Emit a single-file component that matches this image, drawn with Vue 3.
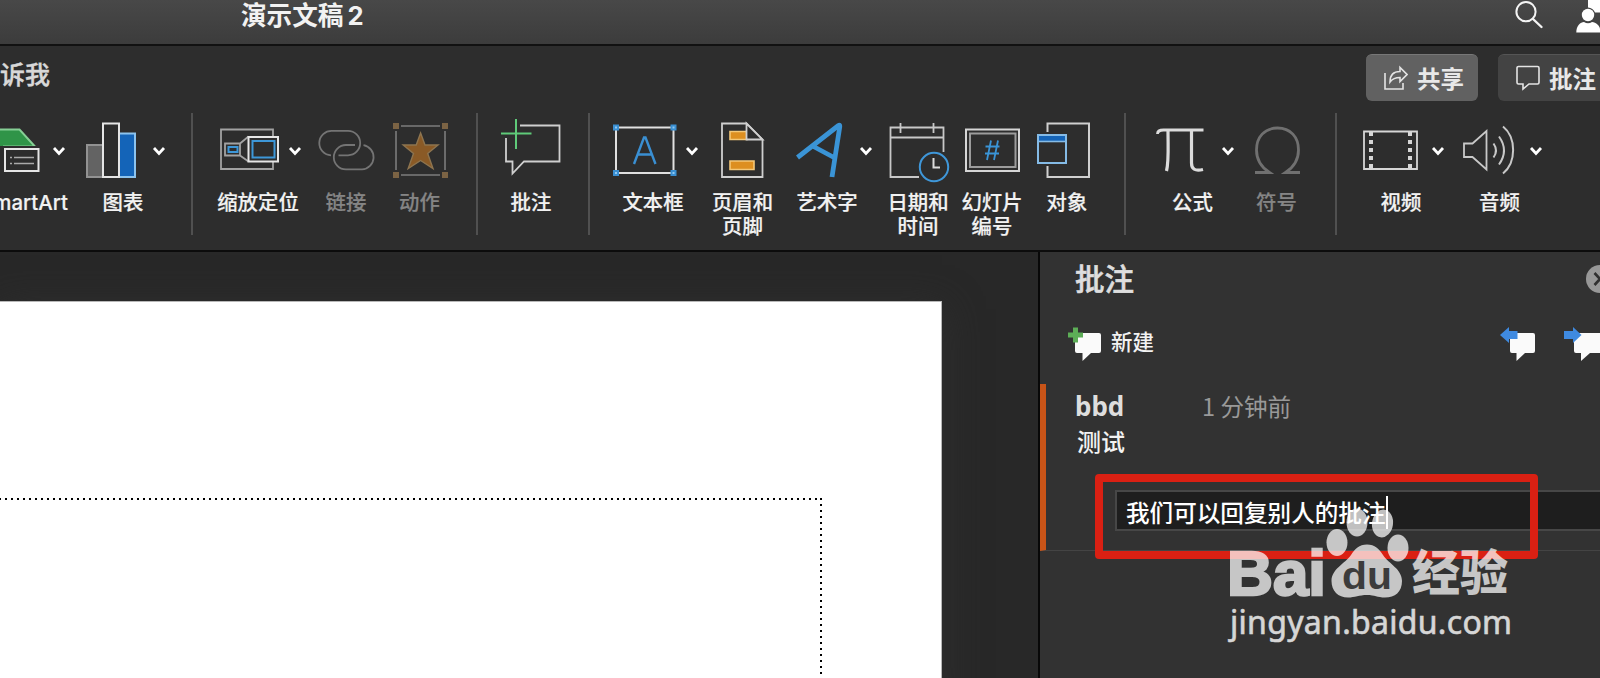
<template>
  <div class="app">
    <header class="titlebar">
      <h1 class="doc-title">演示文稿 2</h1>
      <svg class="title-icons" width="90" height="44" viewBox="1510 0 90 44">
        <circle cx="1526" cy="11.7" r="9.6" fill="none" stroke="#f4f4f4" stroke-width="2" />
        <path d="M1533 19l8.5 8" stroke="#f4f4f4" stroke-width="2.4" stroke-linecap="round" />
        <path d="M1588 0h12v12.5h-5a8 8 0 0 0-7-5z" fill="#fff" />
        <circle cx="1588" cy="15" r="6.2" fill="#fff" />
        <path d="M1576.3 32.5c0-6.5 4.2-10.5 7.7-10.5q4 2.5 8 0c4 0 8 4 8 7v3.5z" fill="#fff" />
      </svg>
    </header>

    <nav class="tabs">
      <span class="tell-me">诉我</span>
      <button class="btn share">
        <svg width="24" height="26" viewBox="0 0 24 26" fill="none" stroke="#e4e4e4" stroke-width="1.6">
          <path d="M1 8v16h18v-6" />
          <path d="M6 17c0-7 4-10.5 10-10.5v-4l7 7-7 7v-4c-4 0-7 .5-10 4.5z" />
        </svg>
        共享
      </button>
      <button class="btn comments">
        <svg width="24" height="26" viewBox="0 0 24 26" fill="none" stroke="#e4e4e4" stroke-width="1.6">
          <path d="M2.5 1.5h19a1.5 1.5 0 0 1 1.5 1.5v14.5a1.5 1.5 0 0 1-1.5 1.5H13l-6 5v-5H2.500A1.5 1.5 0 0 1 1 17.5V3a1.5 1.5 0 0 1 1.5-1.5z" />
        </svg>
        批注
      </button>
    </nav>

    <section class="ribbon">
      <template v-for="(group, g) in groups" :key="group.name">
        <i v-if="g" class="divider"></i>
        <div class="group" :class="group.name">
          <div v-for="tool in group.tools" :key="tool.label" class="tool" :class="{ disabled: tool.disabled, split: tool.menu }">
            <div class="tool-icon">
              <svg :width="tool.w" height="64" :viewBox="`${tool.x} 118 ${tool.w} 64`" fill="none" stroke="#dcdcdc" stroke-width="2" v-html="tool.art"></svg>
              <svg v-if="tool.menu" class="chevron" width="12" height="64" viewBox="0 118 12 64" fill="none" stroke="#fff" stroke-width="2.8">
                <path d="M1 148l5 5.4 5-5.4" />
              </svg>
            </div>
            <div class="tool-label">{{ tool.label }}</div>
          </div>
        </div>
      </template>
    </section>

    <main class="workspace">
      <div class="canvas">
        <div class="slide">
          <div class="placeholder"></div>
        </div>
      </div>

      <aside class="panel">
        <div class="panel-head">
          <h2>批注</h2>
          <svg class="close" width="14" height="28" viewBox="0 0 14 28">
            <circle cx="14" cy="14" r="14" fill="#989898" />
            <path d="M8.5 8l11 12M19.5 8l-11 12" stroke="#303030" stroke-width="2.6" />
          </svg>
        </div>

        <div class="panel-tools">
          <svg width="36" height="36" viewBox="0 0 36 36">
            <path d="M9 6h22q2 0 2 2v16q0 2-2 2h-8l-8.5 8v-8H9q-2 0-2-2V8q0-2 2-2z" fill="#fafafa" />
            <path d="M5 .5h5v5h5v5h-5v5H5v-5H0v-5h5z" fill="#5dae57" />
          </svg>
          <span class="new-label">新建</span>
          <svg class="prev" width="36" height="36" viewBox="0 0 36 36">
            <path d="M12 6h21q2 0 2 2v16q0 2-2 2h-8l-8.5 8v-8H12q-2 0-2-2V8q0-2 2-2z" fill="#fafafa" />
            <path d="M0 8l9-8v4h8.5v8H9V16z" fill="#3f8ae0" />
          </svg>
          <svg class="next" width="36" height="36" viewBox="0 0 36 36">
            <path d="M12 6h24v20h-10l-9 8v-8H12q-2 0-2-2V8q0-2 2-2z" fill="#fafafa" />
            <path d="M17.5 8L9 0v4H0v8h9V16z" fill="#3f8ae0" />
          </svg>
        </div>

        <article class="thread">
          <div class="thread-head">
            <span class="author">bbd</span>
            <span class="time">1 分钟前</span>
          </div>
          <p class="body">测试</p>
          <div class="reply"><span>{{ reply }}</span><i class="caret"></i></div>
          <div class="highlight"></div>
        </article>
      </aside>
    </main>

    <svg class="watermark" width="300" height="150" viewBox="1220 500 300 150" fill="#fff">
      <g opacity=".72">
        <text class="wm-latin" x="1227" y="594.5" font-size="63" textLength="99" lengthAdjust="spacingAndGlyphs">Bai</text>
        <ellipse cx="1337" cy="542.5" rx="10.5" ry="13.5" />
        <ellipse cx="1357" cy="522.5" rx="10.5" ry="14" />
        <ellipse cx="1382.5" cy="523.5" rx="10.5" ry="14" transform="rotate(8 1382.5 523.5)" />
        <ellipse cx="1398" cy="548" rx="10.5" ry="13.5" />
        <path d="M1367 544.5c8 0 12 4.5 16 10.5 6 9 19 14 19 26 0 11-7 16.5-17 16.5-8 0-10-2.5-18-2.5s-12 2.5-19 2.5c-10 0-16.5-6.5-16.5-16.5 0-12 13-17 19.5-26 4-6 8-10.5 16-10.5z" />
        <text class="wm-cjk" x="1412" y="590" font-size="48" textLength="96" lengthAdjust="spacingAndGlyphs">经验</text>
      </g>
      <text class="wm-du" x="1342" y="588.5" font-size="39" textLength="50" lengthAdjust="spacingAndGlyphs">du</text>
      <text class="wm-url" x="1230" y="633.5" font-size="32" textLength="282" opacity=".8">jingyan.baidu.com</text>
    </svg>
  </div>
</template>

<script setup>
import { ref } from 'vue'

const reply = ref('我们可以回复别人的批注')

// artwork is drawn in ribbon coordinates, so each icon only needs its left edge and width
const groups = [
  {
    name: 'illustrations',
    tools: [
      {
        label: 'SmartArt', x: -8, w: 61, menu: true,
        art: `<path d="M-8 129.5H19.5L35 146.5H4V163H-8z" fill="#2f9448" stroke="#86cf95"/>
          <path d="M0 146h41v28H0z" fill="#2d2d2d" stroke="none"/>
          <path d="M5 149h33.5v22H5z" stroke="#e6e6e6"/>
          <path d="M14 157.5h20M14 163.5h20M10 157.5h2M10 163.5h2" stroke="#aaa" stroke-width="1.6"/>`,
      },
      {
        label: '图表', x: 86, w: 67, menu: true,
        art: `<path d="M87 145h16v32H87z" fill="#636363" stroke="#929292"/>
          <path d="M119 133.5h16V177H119z" fill="#1464b8" stroke="#8cc3ee"/>
          <path d="M103 123.5h16V177H103z" fill="#2d2d2d" stroke="#e6e6e6"/>`,
      },
    ],
  },
  {
    name: 'links',
    tools: [
      {
        label: '缩放定位', x: 220, w: 69, menu: true,
        art: `<path d="M221 129.5h52V169h-52z" stroke="#a2a2a2" stroke-width="1.8"/>
          <path d="M225 143.5h15v12h-15zM240 143.5l8.5-7M240 155.5l8.5 6" stroke="#a2a2a2" stroke-width="1.8"/>
          <path d="M228.5 147h9v5h-9z" stroke="#3d97d8"/>
          <path d="M248.5 137h29.5v24.5h-29.5z" fill="#2d2d2d" stroke="#e6e6e6"/>
          <path d="M252.5 141h22v16.5h-22z" stroke="#3d97d8"/>`,
      },
      {
        label: '链接', x: 319, w: 54, disabled: true,
        art: `<g stroke="#747474" stroke-width="1.8"><path d="M330 155.3a12.2 12.2 0 0 1 1-24.4h16a12.2 12.2 0 0 1 0 24.4h-9.5"/>
          <path d="M354 145h-9a12.2 12.2 0 0 0 0 24.4h16a12.2 12.2 0 0 0 1.5-24.2"/></g>`,
      },
      {
        label: '动作', x: 393, w: 55, disabled: true,
        art: `<path d="M401 126h39M401 175h39M396 131v39M445 131v39" stroke="#7c7c7c" stroke-width="1.6"/>
          <g fill="#7b6344" stroke="none"><path d="M393 123h6v6h-6zM442 123h6v6h-6zM393 172h6v6h-6zM442 172h6v6h-6z"/></g>
          <path d="M420.6 133l4.4 12h13l-10.3 8.5 5.3 15-12.4-8-12.4 8 5.3-15-10.3-8.5h13z" fill="#8a5a26" stroke="#8d744f" stroke-width="1.4"/>`,
      },
    ],
  },
  {
    name: 'notes',
    tools: [
      {
        label: '批注', x: 501, w: 60,
        art: `<path d="M520 125.5h39.5v36H524l-11.5 12v-12H506V138" stroke="#cfcfcf" stroke-width="1.8"/>
          <path d="M501 133.5h30.5M516 119v30" stroke="#5fca79"/>`,
      },
    ],
  },
  {
    name: 'text',
    tools: [
      {
        label: '文本框', x: 613, w: 73, menu: true,
        art: `<path d="M616 127.5h57.5V173H616z" stroke="#e0e0e0"/>
          <g fill="#8fc8f2" stroke="#3a8fd2"><path d="M614 125.5h4v4h-4zM671.5 125.5h4v4h-4zM614 171h4v4h-4zM671.5 171h4v4h-4z"/></g>
          <path d="M634 164l10-26.5h1.5l10 26.5M637.5 154.5h14.5" stroke="#3a8fd2" stroke-width="2.4"/>`,
      },
      {
        label: '页眉和\n页脚', x: 715, w: 55,
        art: `<path d="M730 131.5h17v8h-17zM730 161h24v8.5h-24z" fill="#dd8f20" stroke="#f4c878" stroke-width="1.6"/>
          <path d="M746.5 123.5H722V177h40.5v-37.5z" stroke="#cfcfcf" stroke-width="1.8"/>
          <path d="M746.5 123.5v16h16z" fill="#2d2d2d" stroke="#cfcfcf" stroke-width="1.8"/>`,
      },
      {
        label: '艺术字', x: 787, w: 73, menu: true,
        art: `<path d="M797.5 157.5L838.5 125.5q1.5-1 1.3 1l-7.8 50.5M813.5 146.5l20.5 11" stroke="#3a94d6" stroke-width="4.8" stroke-linejoin="round"/>`,
      },
      {
        label: '日期和\n时间', x: 889, w: 58,
        art: `<path d="M919 177h-28.5V127.5h53V152M890.5 137.5h53M900.5 123v10M933.5 123v10" stroke="#c8c8c8" stroke-width="1.8"/>
          <circle cx="934" cy="167" r="14.2" fill="#2d2d2d" stroke="#3f97d9"/>
          <path d="M933.5 158v9.5h6.5" stroke="#dcdcdc"/>`,
      },
      {
        label: '幻灯片\n编号', x: 964, w: 56,
        art: `<path d="M966 129.5h53V171h-53z" stroke="#d6d6d6"/>
          <path d="M970 133.5h45.5V167H970z" stroke="#9c9c9c"/>
          <path d="M991 140.5l-4 19.5M998 140.5l-4 19.5M985.5 146.5h14M985 153.5h14" stroke="#3a94d6" stroke-width="1.8"/>`,
      },
      {
        label: '对象', x: 1037, w: 60,
        art: `<path d="M1047.5 132v-8.5h41.5V177h-41.5v-11" stroke="#d0d0d0"/>
          <path d="M1038 135h28v28h-28z" stroke="#85bbe6"/>
          <path d="M1039 136h26v5h-26z" fill="#1464b8" stroke="none"/>
          <path d="M1038 141.5h28" stroke="#85bbe6" stroke-width="1.6"/>`,
      },
    ],
  },
  {
    name: 'symbols',
    tools: [
      {
        label: '公式', x: 1156, w: 66, menu: true,
        art: `<path d="M1157.5 134c0-3 2-4 6-4h40" stroke-width="2.8"/>
          <path d="M1168 130c0 19 1 31-1.5 41" stroke-width="3.2"/>
          <path d="M1191.5 130v33c0 6 3.5 8.5 11.5 6.5" stroke-width="3.2"/>`,
      },
      {
        label: '符号', x: 1252, w: 51, disabled: true,
        art: `<path d="M1255 172.5h14.5c-7-4.5-13-12-13-22.5 0-13 8-22 21-22s21 9 21 22c0 10.5-6 18-13 22.5h14.5" stroke="#707070" stroke-width="2.8"/>`,
      },
    ],
  },
  {
    name: 'media',
    tools: [
      {
        label: '视频', x: 1363, w: 69, menu: true,
        art: `<path d="M1364 131.5h53V169h-53z" stroke="#d6d6d6" stroke-width="1.8"/>
          <path d="M1371 132v37M1410 132v37" stroke="#d6d6d6" stroke-width="4" stroke-dasharray="4 4"/>`,
      },
      {
        label: '音频', x: 1462, w: 68, menu: true,
        art: `<path d="M1464 143.5h8.5l14-12.5V169.5l-14-12.5H1464z" stroke="#c8c8c8" stroke-width="1.8"/>
          <path d="M1493.5 143.5q5 7 0 14M1499 136.5q10 14 0 28M1503 126.5c13.5 11 13.5 36 0 47" stroke="#c8c8c8"/>`,
      },
    ],
  },
]
</script>

<style>
body { background: #282828; overflow: hidden; }
</style>

<style scoped>
.app {
  position: relative;
  width: 1600px;
  height: 678px;
  display: flex;
  flex-direction: column;
  overflow: hidden;
  font-family: "Noto Sans", "Noto Sans CJK SC", sans-serif;
  color: #f2f2f2;
  background: #2d2d2d;
}

.titlebar {
  box-sizing: border-box;
  height: 46px;
  flex: none;
  display: flex;
  justify-content: space-between;
  padding-left: 241px;
  background: linear-gradient(#484848, #3c3c3c);
  border-bottom: 2px solid #111;
}
.doc-title {
  margin: 0;
  font: 700 25.6px/32px Inter, "Noto Sans CJK SC", sans-serif;
  word-spacing: -2px;
}

.tabs {
  height: 67px;
  flex: none;
  display: flex;
  align-items: flex-start;
  padding-top: 8px;
  box-sizing: border-box;
}
.tell-me {
  margin-right: auto;
  font: 500 25px/38px "Noto Sans CJK SC", sans-serif;
  color: #d8d8d8;
  -webkit-text-stroke: .4px #d8d8d8;
}
.btn {
  box-sizing: border-box;
  height: 47px;
  display: flex;
  align-items: center;
  gap: 9px;
  padding: 0 0 0 18px;
  border: 0;
  border-top: 1px solid #555;
  border-radius: 6px;
  font: 700 23.5px/46px "Noto Sans CJK SC", sans-serif;
  white-space: nowrap;
  color: #e8e8e8;
}
.btn svg { flex: none; }
.share { width: 112px; margin-right: 20px; background: #616161; border-top-color: #777; }
.comments { width: 102px; border-radius: 6px 0 0 6px; background: #434343; }

.ribbon {
  height: 137px;
  flex: none;
  display: flex;
  border-bottom: 2px solid #0c0c0c;
}
.divider { width: 2px; height: 122px; flex: none; background: #505050; }
.group { display: flex; gap: 18px; padding-top: 5px; flex: none; }
.illustrations { gap: 21px; margin-left: -8px; padding-right: 26px; }
.links { gap: 19px; padding: 5px 28px 0 27px; }
.notes { padding: 5px 27px 0 23px; }
.text { gap: 17px; padding: 5px 27px 0 23px; }
.symbols { padding: 5px 32px 0 30px; }
.media { padding-left: 26px; }

.tool {
  width: min-content;
  display: flex;
  flex-direction: column;
  align-items: center;
}
.tool-icon { display: flex; }
.tool-icon svg { display: block; flex: none; overflow: visible; }
.tool-label {
  width: 0;
  margin-top: 8.5px;
  display: flex;
  justify-content: center;
  font: 500 20.4px/24px Inter, "Noto Sans CJK SC", sans-serif;
  text-align: center;
  white-space: pre;
  -webkit-text-stroke: .2px;
}
.split .tool-label { padding-right: 5px; }
.illustrations .tool:first-child .tool-label { padding-right: 9px; }
.disabled .tool-label { padding-right: 2px; color: #858585; }

.workspace { flex: 1; display: flex; min-height: 0; }
.canvas {
  width: 1038px;
  flex: none;
  padding-top: 49px;
  box-sizing: border-box;
  overflow: hidden;
  background: #282828;
}
.slide {
  box-sizing: border-box;
  width: 942px;
  height: 400px;
  padding-top: 196px;
  background: #fff;
  border: solid #b8b8b8;
  border-width: 1px 1px 0 0;
  box-shadow: 0 8px 36px 0 #303030;
}
/* dotted frame: 2px dots on a 6px pitch */
.placeholder {
  width: 822px;
  height: 200px;
  background:
    repeating-linear-gradient(90deg, #000 0 1px, transparent 1px 5px, #000 5px 6px) 0 0 / 100% 2px no-repeat,
    repeating-linear-gradient(#000 0 2px, transparent 2px 6px) 100% 0 / 2px 100% no-repeat;
}

.panel {
  flex: 1;
  min-width: 0;
  border-left: 2px solid #080808;
  background: #323232;
}
.panel-head {
  height: 53px;
  display: flex;
  align-items: center;
  justify-content: space-between;
  padding-left: 35px;
}
.panel-head h2 {
  margin: -4px 0 0;
  font: 500 29.5px/44px "Noto Sans CJK SC", sans-serif;
  color: #dedede;
  -webkit-text-stroke: .6px #dedede;
}
.panel-tools {
  height: 79px;
  box-sizing: border-box;
  display: flex;
  align-items: flex-start;
  padding: 22px 0 0 28px;
}
.panel-tools svg { flex: none; }
.new-label {
  margin: -1px auto 0 7px;
  font: 500 21.5px/30px "Noto Sans CJK SC", sans-serif;
}
.next { margin-left: 28px; }

.thread {
  position: relative;
  box-sizing: border-box;
  height: 167px;
  padding: 4px 0 0 29px;
  border-left: 6px solid #c85418;
  border-bottom: 1px solid #444;
}
.thread-head { display: flex; align-items: center; height: 36px; }
.author { width: 127px; font: 700 26px/36px "Noto Sans", sans-serif; color: #dedede; }
.time { font: 400 23.6px/36px "Noto Sans CJK SC", sans-serif; color: #999; }
.body { margin: -1px 0 0 2px; font: 500 24px/36px "Noto Sans CJK SC", sans-serif; }
.reply {
  box-sizing: border-box;
  display: flex;
  align-items: center;
  height: 41px;
  margin: 31px 0 0 40px;
  padding-left: 9px;
  border: solid #474747;
  border-width: 2px 0 2px 2px;
  background: #1e1e1e;
  font: 500 23.6px/37px "Noto Sans CJK SC", sans-serif;
  color: #fff;
}
.reply span { padding-top: 3px; }
.caret { width: 2px; height: 33px; margin-top: 3px; background: #fff; }
.highlight {
  position: absolute;
  left: 49px;
  top: 90px;
  box-sizing: border-box;
  width: 443px;
  height: 85px;
  border: 8px solid #da2013;
  border-radius: 4px;
}

.watermark { position: absolute; left: 1220px; top: 500px; }
.wm-latin { font-family: "Liberation Sans", sans-serif; font-weight: 700; stroke: #fff; stroke-width: 2.5px; }
.wm-du { font-family: "Liberation Sans", sans-serif; font-weight: 700; fill: #3c3c3c; }
.wm-cjk { font-family: "Noto Sans CJK SC", sans-serif; font-weight: 900; }
.wm-url { font-family: "Noto Sans", sans-serif; stroke: #fff; stroke-width: .6px; }
</style>
